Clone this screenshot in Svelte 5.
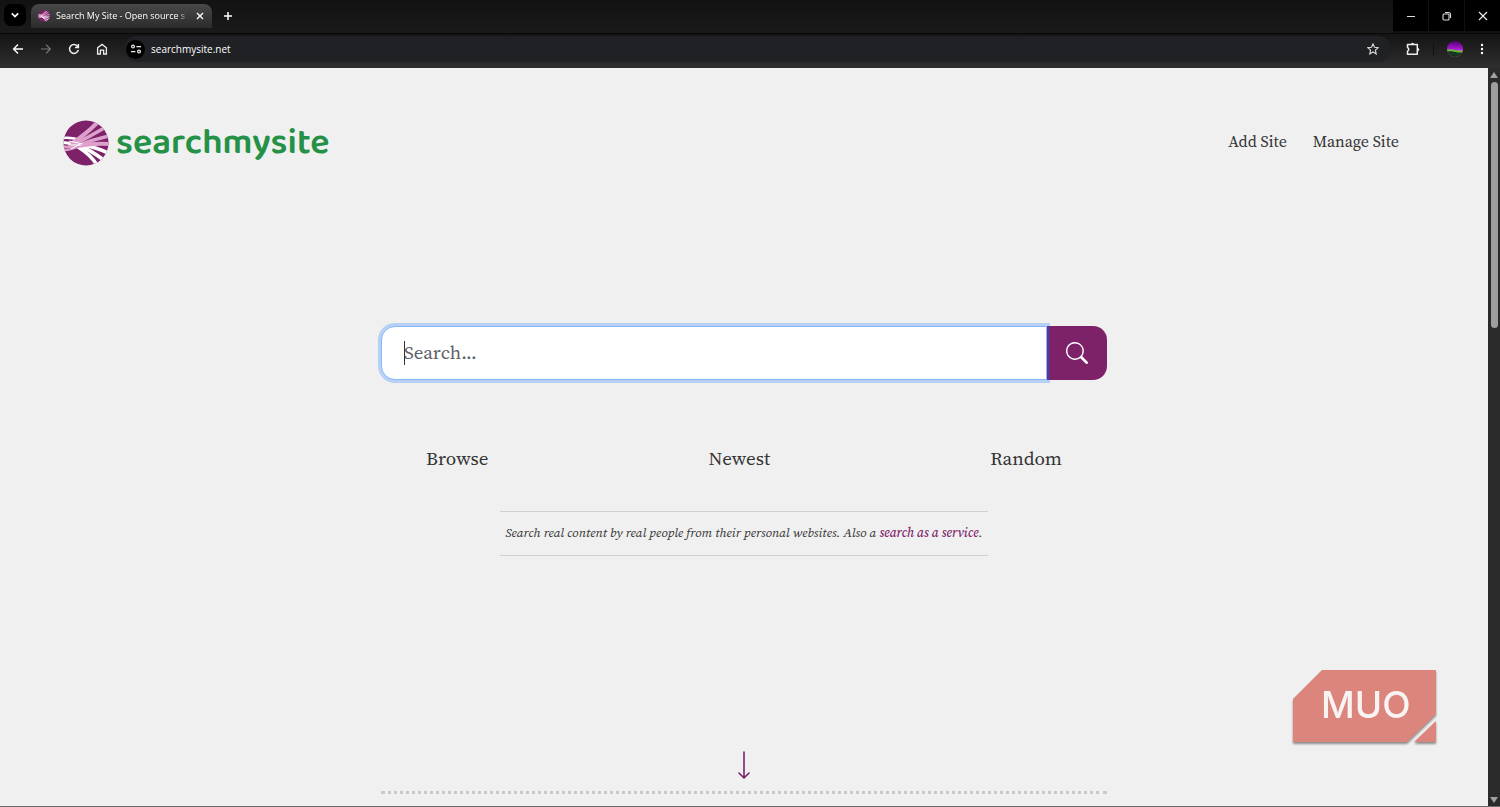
<script>
  let query = $state('');
  const sections = ['Browse', 'Newest', 'Random'];
</script>

<div class="window">
  <header class="chrome">
    <div class="tabs">
      <button class="tab-search" aria-label="Search tabs">
        <svg width="10" height="10" viewBox="0 0 10 10" fill="none" stroke="#fff" stroke-width="1.7"><path d="M1.8 3.4 5 6.6l3.2-3.2" /></svg>
      </button>
      <div class="tab">
        <svg width="12" height="12" viewBox="0 0 46 46" aria-hidden="true"><use href="#mark" /></svg>
        <span class="tab-title">Search My Site - Open source s</span>
        <button class="plain" aria-label="Close tab">
          <svg width="8" height="8" viewBox="0 0 8 8" stroke="#fff" stroke-width="1.4"><path d="m1 1 6 6M7 1 1 7" /></svg>
        </button>
      </div>
      <button class="plain new-tab" aria-label="New tab">
        <svg width="10" height="10" viewBox="0 0 10 10" stroke="#fff" stroke-width="1.5"><path d="M5 1v8M1 5h8" /></svg>
      </button>
      <div class="controls">
        <button aria-label="Minimize"><svg width="10" height="10" viewBox="0 0 10 10" stroke="#ddd"><path d="M1 5.5h8" /></svg></button>
        <button aria-label="Restore"><svg width="10" height="10" viewBox="0 0 10 10" fill="none" stroke="#ddd" stroke-width="1.1"><rect x="1" y="3" width="6" height="6" rx="1" /><path d="M3 1.5h3.5a2 2 0 0 1 2 2V7" /></svg></button>
        <button aria-label="Close"><svg width="10" height="10" viewBox="0 0 10 10" stroke="#eee" stroke-width="1.1"><path d="m1 1 8 8M9 1 1 9" /></svg></button>
      </div>
    </div>

    <div class="toolbar">
      <button class="plain" aria-label="Back"><svg width="12" height="12" viewBox="0 0 12 12" fill="none" stroke="#fff" stroke-width="1.4"><path d="M11 6H2M6 1.6 1.6 6 6 10.4" /></svg></button>
      <button class="plain" aria-label="Forward"><svg width="12" height="12" viewBox="0 0 12 12" fill="none" stroke="#777" stroke-width="1.2"><path d="M1 6h9M6 1.6 10.4 6 6 10.4" /></svg></button>
      <button class="plain" aria-label="Reload"><svg width="12" height="12" viewBox="0 0 12 12" fill="none" stroke="#eee" stroke-width="1.5"><path d="M10.3 6.8A4.4 4.4 0 1 1 9.4 3.2L10 4M10.4 1v3.6H7" /></svg></button>
      <button class="plain" aria-label="Home"><svg width="12" height="12" viewBox="0 0 12 12" fill="none" stroke="#eee" stroke-width="1.3"><path d="M1.6 11V4.8L6 1.4l4.4 3.4V11H7.6V7.2H4.4V11z" /></svg></button>
      <div class="address">
        <button class="site-info" aria-label="View site information">
          <svg width="12" height="12" viewBox="0 0 12 12" fill="none" stroke="#eee" stroke-width="1.2"><circle cx="3" cy="3.6" r="1.4" /><path d="M6.4 3.6H11M1 8.6h4.4" /><circle cx="9" cy="8.6" r="1.4" /></svg>
        </button>
        <input class="url" aria-label="Address" value="searchmysite.net" />
        <button class="plain" aria-label="Bookmark this page"><svg width="12" height="12" viewBox="0 0 12 12" fill="none" stroke="#ddd" stroke-width="1.1"><path d="m6 .9 1.5 3.4 3.7.4-2.8 2.5.8 3.7L6 9l-3.2 1.9.8-3.7L.8 4.7l3.7-.4z" /></svg></button>
      </div>
      <div class="tools">
        <button class="plain" aria-label="Extensions"><svg width="14" height="14" viewBox="0 0 14 14" fill="none" stroke="#eee" stroke-width="1.5" stroke-linejoin="round"><path d="M1.5 2.5h9.8v9.8H1.5V9.2a2 2 0 0 0 0-3.7z" /><path d="M5 2.2a1.5 1.5 0 0 1 3 0zM11.8 6a1.4 1.4 0 0 1 0 3z" fill="#eee" stroke="none" /></svg></button>
        <span class="divider"></span>
        <button class="plain" aria-label="Profile">
          <svg width="16" height="16" viewBox="0 0 16 16"><defs><clipPath id="face"><circle cx="8" cy="8" r="8" /></clipPath><linearGradient id="sky" x2="0" y2="1"><stop stop-color="#4d0070" /><stop offset=".5" stop-color="#a91ad0" /><stop offset=".65" stop-color="#d965e0" /></linearGradient></defs><g clip-path="url(#face)"><path fill="url(#sky)" d="M0 0h16v16H0z" /><path fill="#202b24" d="M0 9.5 5 9l11 1.8V16H0z" /><path d="M0 9.4h5l6 1.2h5" fill="none" stroke="#65c52d" stroke-width="1.8" /><path d="M2 13h12" stroke="#064d24" /></g></svg>
        </button>
        <button class="plain" aria-label="Menu"><svg width="4" height="12" viewBox="0 0 4 12" fill="#fff"><circle cx="2" cy="2" r="1.2" /><circle cx="2" cy="6" r="1.2" /><circle cx="2" cy="10" r="1.2" /></svg></button>
      </div>
    </div>
  </header>

  <div class="viewport">
    <main class="page">
      <div class="masthead">
        <a class="brand" href="/">
          <svg width="46" height="46" viewBox="0 0 46 46" aria-hidden="true">
            <defs><clipPath id="disc"><circle cx="23" cy="23" r="22.5" /></clipPath></defs>
            <g id="mark" clip-path="url(#disc)">
              <path fill="#7d2169" d="M0 0h46v46H0z" />
              <g fill="none" stroke="#fff">
                <path d="M0 18q10-1 18 3" stroke-width="2.5" />
                <path d="M0 22.5 20 25" stroke-width="3" />
                <path d="M18 25q16 2 29 9" stroke-width="3.6" />
                <path d="M16 26q12 4 26 15" stroke-width="3.6" />
                <path d="M15 27q12 7 19 18" stroke-width="3.6" />
              </g>
              <g fill="none" stroke="#dda0cc">
                <path d="M8 24Q22 15 35 2" stroke-width="4" />
                <path d="M8 26Q26 17 43 7" stroke-width="3.6" />
                <path d="M10 27q18-7 36-11" stroke-width="3.4" />
                <path d="M14 26q18-3 32-2" stroke-width="4" />
                <path d="M0 26.5q8 1 15-1M0 30q9 0 16-4" stroke-width="2.4" />
              </g>
              <path d="M6 21l14 3M5 25l13 0M8 29l9-5" fill="none" stroke="#fff" stroke-width="1" />
            </g>
          </svg>
          <span>searchmysite</span>
        </a>
        <nav class="site-nav"><a href="/add">Add Site</a><a href="/manage">Manage Site</a></nav>
      </div>

      <div class="center">
        <form class="search" onsubmit={(e) => e.preventDefault()}>
          <div class="field">
            <input type="text" aria-label="Search" placeholder="Search..." bind:value={query} />
            <span class="caret"></span>
          </div>
          <button aria-label="Submit search">
            <svg width="22" height="22" viewBox="0 0 16 16" fill="#fff"><path d="M11.742 10.344a6.5 6.5 0 1 0-1.397 1.398h-.001c.03.04.062.078.098.115l3.85 3.85a1 1 0 0 0 1.415-1.414l-3.85-3.85a1.007 1.007 0 0 0-.115-.1zM12 6.5a5.5 5.5 0 1 1-11 0 5.5 5.5 0 0 1 11 0z" /></svg>
          </button>
        </form>
        <nav class="sections">
          {#each sections as name}<a href={`/${name.toLowerCase()}`}>{name}</a>{/each}
        </nav>
        <p class="tagline">Search real content by real people from their personal websites. Also a <a href="/service">search as a service</a>.</p>
        <a class="more" href="#results" aria-label="Scroll to results">
          <svg width="12" height="30" viewBox="0 0 12 30" fill="none" stroke="#7d2169" stroke-width="1.6" stroke-linecap="round" stroke-linejoin="round"><path d="M6 2v26M1 23l5 5 5-5" /></svg>
        </a>
        <div class="dots" id="results"></div>
      </div>

      <div class="watermark">
        <svg width="150" height="80" viewBox="0 0 150 80" aria-hidden="true"><path d="M3 32 32 3h114v44l-29 28H3zM146 54v21h-22z" fill="#dc857d" /></svg>
        <span>MUO</span>
      </div>
    </main>
    <div class="scrollbar" aria-hidden="true">
      <svg width="8" height="6" viewBox="0 0 8 6" fill="#a0a0a0"><path d="M4 0 8 6H0z" /></svg>
      <span class="thumb"></span>
      <svg width="8" height="6" viewBox="0 0 8 6" fill="#a0a0a0"><path d="M4 6 0 0h8z" /></svg>
    </div>
  </div>
</div>

<style>
  :global(body) { margin: 0; background: #f0f0f0; }
  * { box-sizing: border-box; }
  button { border: 0; margin: 0; padding: 0; display: grid; place-items: center; background: none; cursor: pointer; }
  a { color: inherit; text-decoration: none; }
  svg { display: block; flex: none; }

  .window { min-height: 100vh; display: flex; flex-direction: column; font-family: "Source Serif Pro", "Source Serif 4", "Liberation Serif", serif; color: #333; }

  .chrome { font-family: "Segoe UI", "Open Sans", sans-serif; color: #fff; background: #171717; }
  .tabs { display: flex; height: 34px; background: linear-gradient(#121212, #1a1a1a); border-bottom: 1px solid #080808; }
  .tab-search { width: 22px; height: 22px; margin: 4px 5px 0 4px; border-radius: 7px; background: #000; }
  .tab { display: flex; align-items: center; gap: 6px; width: 181px; margin-top: 4px; height: 24px; padding: 0 8px 0 7px; border-radius: 8px 8px 0 0; background: linear-gradient(#484848, #2c2c2c); }
  .tab-title { flex: 1; min-width: 0; overflow: hidden; white-space: nowrap; font-size: 9px; line-height: 20px; mask-image: linear-gradient(90deg, #000 90%, transparent); }
  .plain { height: 20px; }
  .new-tab { width: 32px; margin-top: 6px; }
  .controls { display: flex; margin-left: auto; gap: 1px; background: #111; }
  .controls button { width: 35px; height: 31px; background: #000; }

  .toolbar { display: flex; align-items: center; height: 34px; padding: 0 12px 4px 4px; background: linear-gradient(#141414, #2f2f2f); }
  .toolbar > .plain { width: 28px; }
  .address { flex: 1; display: flex; align-items: center; height: 26px; margin-left: 8px; padding: 0 12px 0 2px; border-radius: 13px; background: #202124; }
  .site-info { width: 19px; height: 19px; border-radius: 50%; background: #000; }
  .url { flex: 1; min-width: 0; border: 0; outline: 0; padding: 0 0 0 6px; background: none; color: #fff; font: 10px/20px "Segoe UI", "Open Sans", sans-serif; }
  .tools { display: flex; align-items: center; gap: 13px; padding-left: 15px; }
  .tools .plain:last-child { width: 12px; }
  .divider { width: 1px; height: 12px; background: #111; }

  .viewport { flex: 1; display: flex; border-bottom: 1px solid #6a6a6a; }
  .page { position: relative; flex: 1; min-width: 0; display: flex; flex-direction: column; background: #f0f0f0; }
  .masthead { display: flex; align-items: center; justify-content: space-between; padding: 52px 89px 0 63px; }
  .brand { display: flex; align-items: center; gap: 7px; color: #259147; font: 600 36px/46px "Baloo 2", "Open Sans", sans-serif; }
  .site-nav { display: flex; gap: 26px; padding-bottom: 4px; font-size: 16px; line-height: 24px; }

  .center { width: 100%; max-width: 726px; margin: 0 auto; padding-top: 160px; flex: 1; display: flex; flex-direction: column; }
  .search { display: flex; height: 54px; }
  .field { position: relative; z-index: 1; flex: 1; display: flex; }
  .field input { width: 100%; padding: 0 22px 2px; border: 1px solid #86b7fe; border-radius: 14px 0 0 14px; outline: 0; background: #fff; box-shadow: 0 0 0 3px rgba(13, 110, 253, .25); color: #333; font: 19px/30px "Source Serif Pro", "Source Serif 4", "Liberation Serif", serif; }
  .field input::placeholder { color: #5c6066; opacity: 1; }
  .caret { position: absolute; left: 23px; top: 15px; width: 1px; height: 24px; background: #333; }
  .search button { width: 60px; border-radius: 0 14px 14px 0; background: #7d2169; }
  .sections { display: flex; justify-content: space-between; margin-top: 63px; padding: 0 45px; font-size: 19px; line-height: 30px; }
  .tagline { align-self: center; width: 488px; margin: 38px 0 0; padding: 9px 0 10px; border: solid #d0d0d0; border-width: 1px 0; text-align: center; font-size: 13px; line-height: 24px; font-style: italic; }
  .tagline a { color: #7d2169; font-weight: 500; }
  .more { align-self: center; margin-top: auto; padding-top: 40px; }
  .dots { margin: 11px 0 12px; border-top: 3px dotted #c9c9c9; }

  .watermark { position: absolute; right: 48px; bottom: 59px; filter: drop-shadow(0 2px 1px #8a8a8a); }
  .watermark span { position: absolute; inset: 0; padding: 16px 0 0 31px; color: #f8f4f4; font: 500 37px/44px Inter, sans-serif; }

  .scrollbar { width: 12px; display: flex; flex-direction: column; align-items: center; padding: 4px 0 3px; background: #2b2b2b; }
  .thumb { width: 7px; height: 246px; margin: 4px 0 auto; border-radius: 4px; background: #9f9f9f; }
</style>
